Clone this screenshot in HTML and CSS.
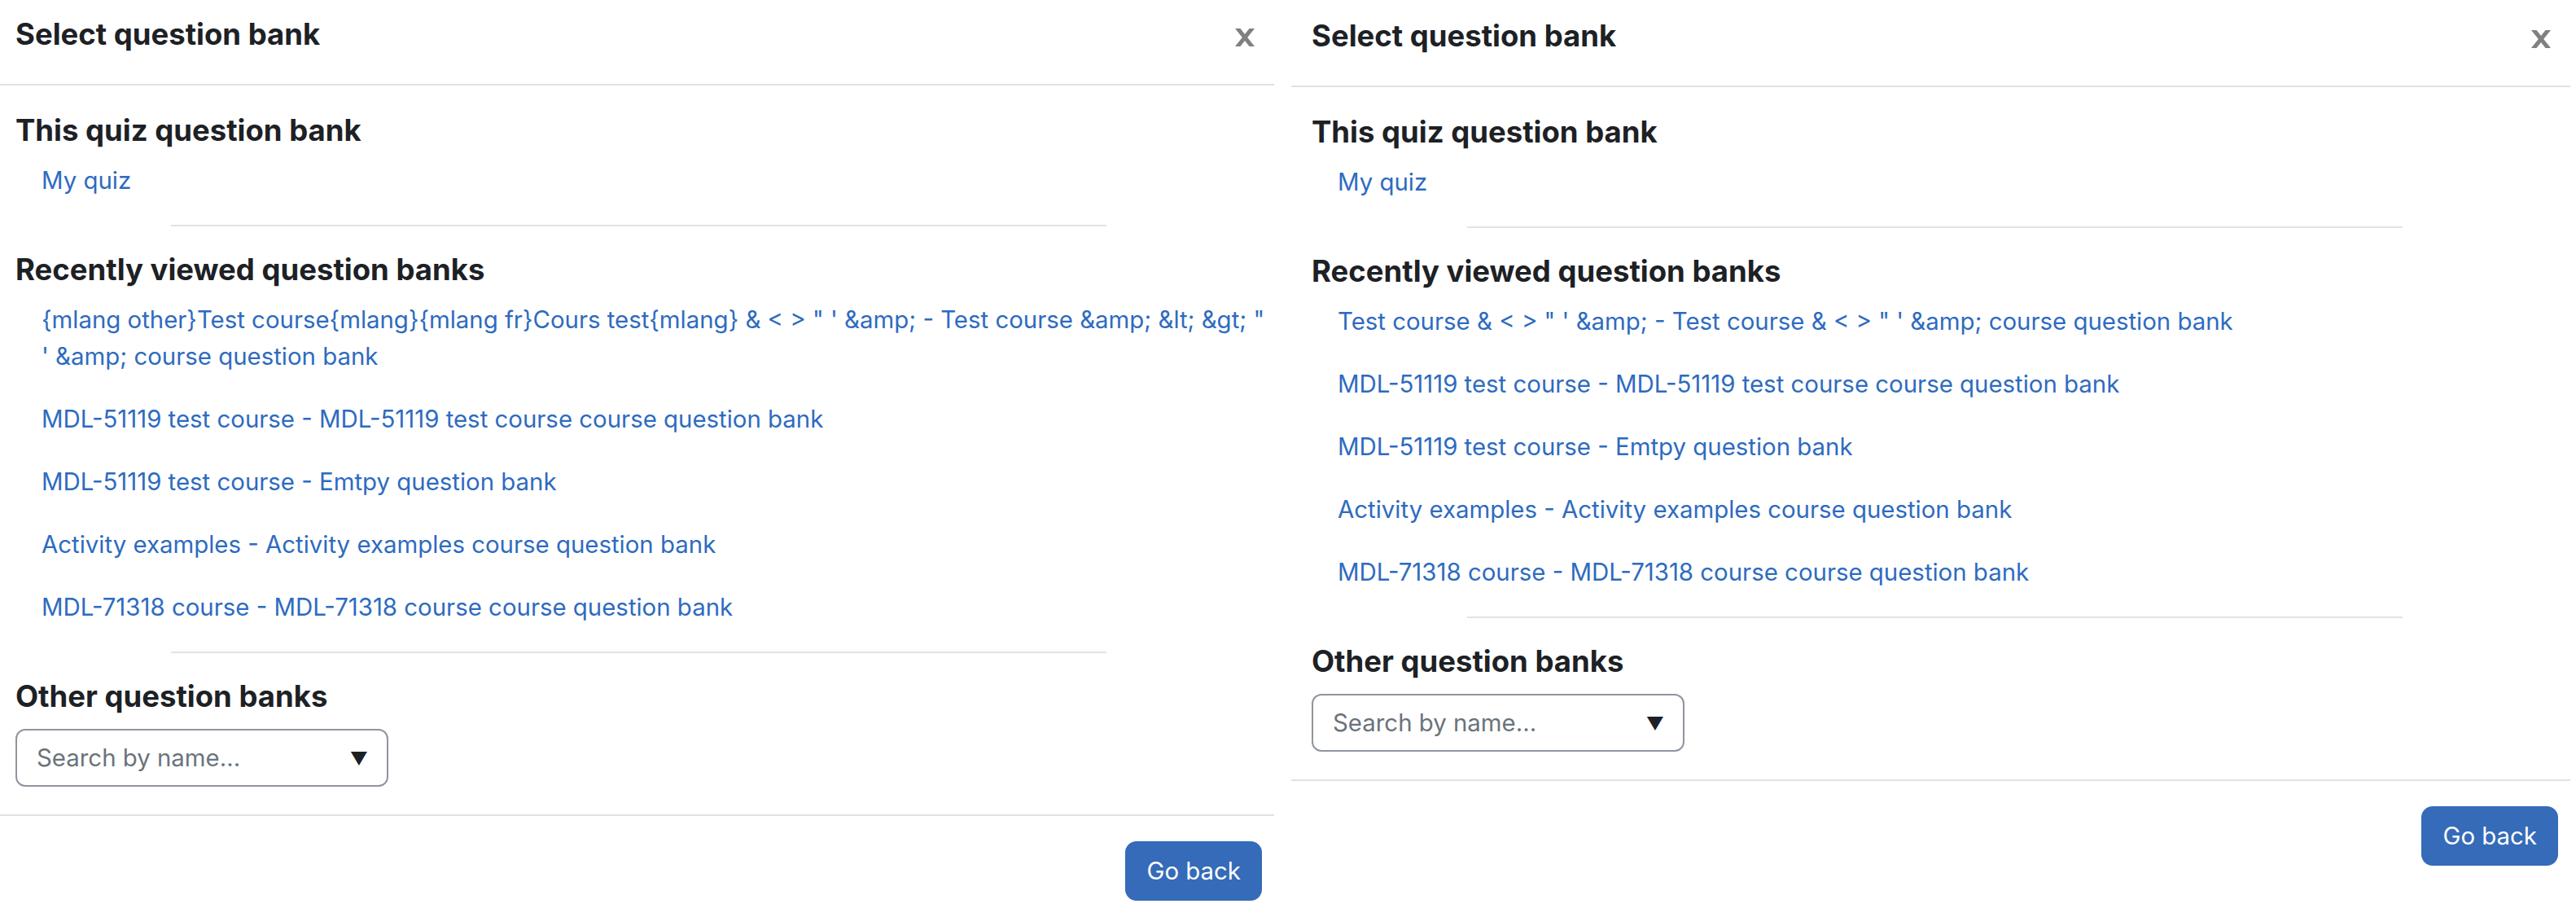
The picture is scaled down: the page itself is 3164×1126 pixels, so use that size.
FILE: index.html
```html
<!DOCTYPE html>
<html lang="en">
<head>
<meta charset="utf-8">
<title>Select question bank</title>
<link rel="stylesheet" href="styles.css">
</head>
<body>
<div class="page">
  <section class="modal modal-left">
    <header class="modal-header">
      <h5 class="modal-title">Select question bank</h5>
      <button class="btn-close" aria-label="Close">
        <svg viewBox="0 0 24 22" width="24" height="22"><polygon points="0,0 6.5,0 24,22 17.5,22"/><polygon points="17.5,0 24,0 6.5,22 0,22"/></svg>
      </button>
    </header>
    <div class="modal-body">
      <h5 class="section-title">This quiz question bank</h5>
      <ul class="bank-list">
        <li><a href="#">My quiz</a></li>
      </ul>
      <hr class="divider">
      <h5 class="section-title">Recently viewed question banks</h5>
      <ul class="bank-list">
        <li><a href="#">{mlang other}Test course{mlang}{mlang fr}Cours test{mlang} &amp; &lt; &gt; " ' &amp;amp; - Test course &amp;amp; &amp;lt; &amp;gt; " ' &amp;amp; course question bank</a></li>
        <li><a href="#">MDL-51119 test course - MDL-51119 test course course question bank</a></li>
        <li><a href="#">MDL-51119 test course - Emtpy question bank</a></li>
        <li><a href="#">Activity examples - Activity examples course question bank</a></li>
        <li><a href="#">MDL-71318 course - MDL-71318 course course question bank</a></li>
      </ul>
      <hr class="divider">
      <h5 class="section-title">Other question banks</h5>
      <div class="search-select">
        <span class="placeholder">Search by name...</span>
        <span class="caret">&#9660;</span>
      </div>
    </div>
    <footer class="modal-footer">
      <button class="btn-primary">Go back</button>
    </footer>
  </section>

  <section class="modal modal-right">
    <header class="modal-header">
      <h5 class="modal-title">Select question bank</h5>
      <button class="btn-close" aria-label="Close">
        <svg viewBox="0 0 24 22" width="24" height="22"><polygon points="0,0 6.5,0 24,22 17.5,22"/><polygon points="17.5,0 24,0 6.5,22 0,22"/></svg>
      </button>
    </header>
    <div class="modal-body">
      <h5 class="section-title">This quiz question bank</h5>
      <ul class="bank-list">
        <li><a href="#">My quiz</a></li>
      </ul>
      <hr class="divider">
      <h5 class="section-title">Recently viewed question banks</h5>
      <ul class="bank-list">
        <li><a href="#">Test course &amp; &lt; &gt; " ' &amp;amp; - Test course &amp; &lt; &gt; " ' &amp;amp; course question bank</a></li>
        <li><a href="#">MDL-51119 test course - MDL-51119 test course course question bank</a></li>
        <li><a href="#">MDL-51119 test course - Emtpy question bank</a></li>
        <li><a href="#">Activity examples - Activity examples course question bank</a></li>
        <li><a href="#">MDL-71318 course - MDL-71318 course course question bank</a></li>
      </ul>
      <hr class="divider">
      <h5 class="section-title">Other question banks</h5>
      <div class="search-select">
        <span class="placeholder">Search by name...</span>
        <span class="caret">&#9660;</span>
      </div>
    </div>
    <footer class="modal-footer">
      <button class="btn-primary">Go back</button>
    </footer>
  </section>
</div>
</body>
</html>
```

FILE: styles.css
```css
* { box-sizing: border-box; }

html, body {
  margin: 0;
  padding: 0;
  background: #ffffff;
  overflow: hidden;
}

body {
  font-family: Inter, "Noto Sans", "Liberation Sans", sans-serif;
  color: #1d2125;
  width: 3164px;
  height: 1126px;
}

.page {
  display: flex;
  gap: 21px;
  margin-left: -6px;
}

.modal {
  flex: 0 0 1571px;
  width: 1571px;
  display: flex;
  flex-direction: column;
}

.modal-right {
  margin-top: 2px;
}

.modal-header {
  display: flex;
  align-items: flex-start;
  justify-content: space-between;
  height: 105px;
  padding: 20px 24px 0 25px;
  border-bottom: 2px solid #dee2e6;
}

.modal-title,
.section-title {
  margin: 0;
  font-size: 36.5px;
  line-height: 45px;
  font-weight: 700;
}

.btn-close {
  border: 0;
  background: none;
  padding: 0;
  margin-top: 15px;
  width: 24px;
  height: 22px;
  cursor: pointer;
}

.btn-close svg {
  display: block;
  fill: #808080;
}

.modal-body {
  padding: 33px 0 34px 25px;
}

.bank-list {
  list-style: none;
  margin: 0;
  padding: 0 0 0 32px;
}

.bank-list li {
  padding: 16px 0;
  font-size: 29.4px;
  line-height: 45px;
}

.bank-list a {
  color: #2e6bbf;
  text-decoration: none;
}

.divider {
  width: 1149px;
  margin: 16px 0 31px 191px;
  border: 0;
  border-top: 2px solid #e2e3e5;
  height: 0;
}

.search-select {
  margin-top: 17px;
  width: 458px;
  height: 71px;
  border: 2px solid #8f959e;
  border-radius: 12px;
  display: flex;
  align-items: center;
  justify-content: space-between;
  padding: 0 23px 0 24px;
}

.placeholder {
  color: #6a737b;
  font-size: 29.4px;
  line-height: 45px;
}

.caret {
  color: #1d2125;
  font-size: 22px;
  line-height: 22px;
}

.modal-footer {
  display: flex;
  justify-content: flex-end;
  padding: 31px 15px 0 0;
  border-top: 2px solid #dee2e6;
}

.btn-primary {
  font-family: Inter, "Noto Sans", "Liberation Sans", sans-serif;
  background: #356bb9;
  color: #ffffff;
  border: 2px solid #356bb9;
  border-radius: 14px;
  font-size: 29.4px;
  line-height: 45px;
  padding: 12px 24px;
  height: 73px;
  white-space: nowrap;
}
```
